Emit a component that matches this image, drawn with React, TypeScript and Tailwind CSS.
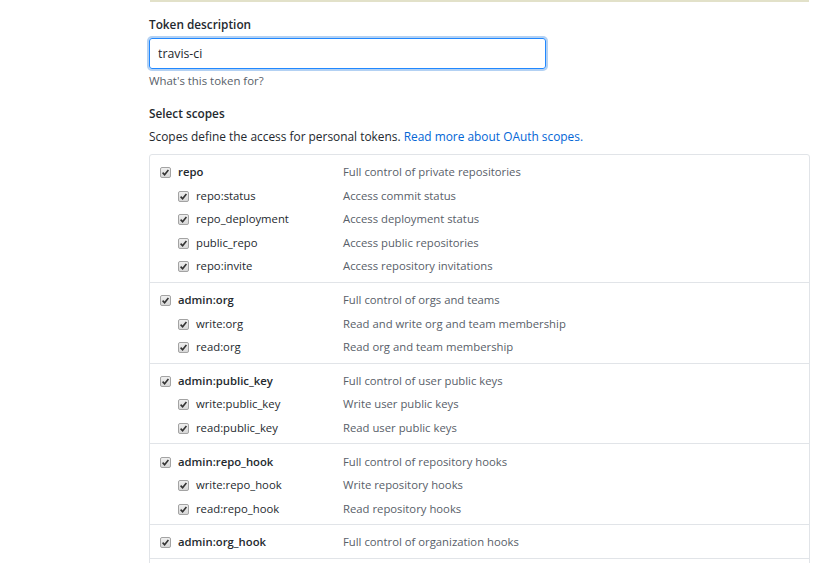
import React from "react";

type Scope = { name: string; desc: string };
type Group = { parent: Scope; children: Scope[] };

const groups: Group[] = [
  {
    parent: { name: "repo", desc: "Full control of private repositories" },
    children: [
      { name: "repo:status", desc: "Access commit status" },
      { name: "repo_deployment", desc: "Access deployment status" },
      { name: "public_repo", desc: "Access public repositories" },
      { name: "repo:invite", desc: "Access repository invitations" },
    ],
  },
  {
    parent: { name: "admin:org", desc: "Full control of orgs and teams" },
    children: [
      { name: "write:org", desc: "Read and write org and team membership" },
      { name: "read:org", desc: "Read org and team membership" },
    ],
  },
  {
    parent: { name: "admin:public_key", desc: "Full control of user public keys" },
    children: [
      { name: "write:public_key", desc: "Write user public keys" },
      { name: "read:public_key", desc: "Read user public keys" },
    ],
  },
  {
    parent: { name: "admin:repo_hook", desc: "Full control of repository hooks" },
    children: [
      { name: "write:repo_hook", desc: "Write repository hooks" },
      { name: "read:repo_hook", desc: "Read repository hooks" },
    ],
  },
  {
    parent: { name: "admin:org_hook", desc: "Full control of organization hooks" },
    children: [],
  },
];

const Check = () => (
  <svg width="11" height="11" viewBox="0 0 11 11" className="shrink-0">
    <defs>
      <linearGradient id="cb" x1="0" y1="0" x2="0" y2="1">
        <stop offset="0" stopColor="#f0f0f0" />
        <stop offset="1" stopColor="#d6d6d6" />
      </linearGradient>
    </defs>
    <rect x="0.5" y="0.5" width="10" height="10" rx="1.5" fill="url(#cb)" stroke="#a3a3a3" />
    <path d="M2.6 5.6 L4.6 7.7 L8.4 3" fill="none" stroke="#333" strokeWidth="1.6" />
  </svg>
);

const Row = ({ scope, child }: { scope: Scope; child?: boolean }) => (
  <div className="flex items-center h-[23.5px] text-[11.3px]">
    <div className={`flex items-center gap-[7px] w-[193px] ${child ? "pl-[28px]" : "pl-[10px]"}`}>
      <Check />
      <span className={child ? "text-[#24292e]" : "font-semibold text-[#24292e]"}>{scope.name}</span>
    </div>
    <span className="text-[#586069]">{scope.desc}</span>
  </div>
);

export default function App() {
  return (
    <div className="min-h-[563px] bg-white pl-[149px] pr-[17px]" style={{ fontFamily: '"Open Sans", Arial, sans-serif' }}>
      <div className="h-[2px] bg-[#e2e1c9] ml-[1px] mr-[1px]" />
      <div className="mt-[13px] h-[18px] leading-[18px] text-[11.8px] font-semibold text-[#24292e]">Token description</div>
      <input
        readOnly
        value="travis-ci"
        className="mt-[5px] block w-[397px] h-[31px] px-[8px] rounded-[3px] border border-[#2188ff] text-[12.3px] text-[#24292e] outline-none shadow-[0_0_0_2px_rgba(3,102,214,0.3)]"
      />
      <div className="mt-[4px] h-[16px] leading-[16px] text-[11.4px] text-[#586069]">What's this token for?</div>
      <div className="mt-[15px] h-[18px] leading-[18px] text-[11.8px] font-semibold text-[#24292e]">Select scopes</div>
      <div className="mt-[5px] h-[18px] leading-[18px] text-[11.9px] text-[#24292e]">
        Scopes define the access for personal tokens. <span className="text-[#0366d6]">Read more about OAuth scopes.</span>
      </div>
      <div className="mt-[9px] border border-[#e1e4e8] rounded-t-[3px]">
        {groups.map((g) => (
          <div key={g.parent.name} className="border-b border-[#e1e4e8] pt-[6px] pb-[3.3px]">
            <Row scope={g.parent} />
            {g.children.map((c) => (
              <Row key={c.name} scope={c} child />
            ))}
          </div>
        ))}
        <div className="h-[20px]" />
      </div>
    </div>
  );
}
